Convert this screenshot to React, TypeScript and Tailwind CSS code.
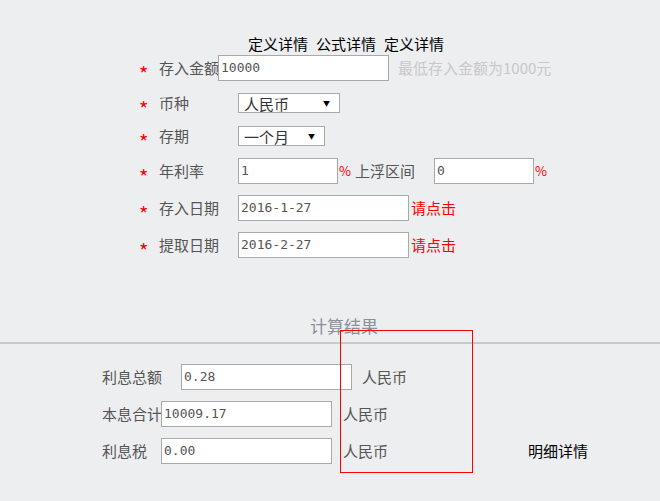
import React from "react";

const font = { fontFamily: '"Noto Sans CJK SC", "Noto Sans", sans-serif' };

function Star() {
  return (
    <span className="w-[22px] pl-[2px] pt-[12px] text-[20px] leading-none text-[#ff0000]">*</span>
  );
}

function Box({ value, w }: { value: string; w: string }) {
  return (
    <div
      className={`${w} h-[26px] border border-[#a9a9a9] bg-white flex items-center pl-[2px] text-[13px] text-[#555] font-['DejaVu_Sans_Mono',monospace]`}
    >
      {value}
    </div>
  );
}

function Select({ value, w }: { value: string; w: string }) {
  return (
    <div
      className={`${w} h-[20px] border border-[#a9a9a9] bg-white flex items-center justify-between pl-[5px] pr-[9px] text-[15px] text-[#333]`}
    >
      <span className="leading-none">{value}</span>
      <span className="text-[7px] text-black leading-none">▼</span>
    </div>
  );
}

export default function App() {
  return (
    <div className="relative w-[660px] h-[501px] bg-[#edeef0] overflow-hidden" style={font}>
      <div className="flex gap-[8px] pt-[34px] pl-[248px] h-[55px] text-[15px] leading-[20px] text-black whitespace-nowrap">
        <span>定义详情</span>
        <span>公式详情</span>
        <span>定义详情</span>
      </div>

      <div className="pl-[137px] text-[15px] text-[#555]">
        <div className="flex items-center h-[26px]">
          <Star />
          <span className="w-[59px] whitespace-nowrap">存入金额</span>
          <Box value="10000" w="w-[171px]" />
          <span className="ml-[9px] text-[#c8c8c8] whitespace-nowrap">最低存入金额为1000元</span>
        </div>
        <div className="flex items-center h-[20px] mt-[12px]">
          <Star />
          <span className="w-[79px]">币种</span>
          <Select value="人民币" w="w-[102px]" />
        </div>
        <div className="flex items-center h-[20px] mt-[13px]">
          <Star />
          <span className="w-[79px]">存期</span>
          <Select value="一个月" w="w-[87px]" />
        </div>
        <div className="flex items-center h-[26px] mt-[12px]">
          <Star />
          <span className="w-[79px]">年利率</span>
          <Box value="1" w="w-[100px]" />
          <span className="w-[17px] pl-[1px] text-[13px] text-[#ff0000]">%</span>
          <span className="w-[79px]">上浮区间</span>
          <Box value="0" w="w-[100px]" />
          <span className="pl-[1px] text-[13px] text-[#ff0000]">%</span>
        </div>
        <div className="flex items-center h-[26px] mt-[11px]">
          <Star />
          <span className="w-[79px]">存入日期</span>
          <Box value="2016-1-27" w="w-[171px]" />
          <span className="ml-[2px] text-[#ff0000]">请点击</span>
        </div>
        <div className="flex items-center h-[26px] mt-[11px]">
          <Star />
          <span className="w-[79px]">提取日期</span>
          <Box value="2016-2-27" w="w-[171px]" />
          <span className="ml-[2px] text-[#ff0000]">请点击</span>
        </div>
      </div>

      <div className="mt-[57px] pl-[310px] h-[27px] text-[17px] leading-[22px] text-[#8a8f99]">计算结果</div>
      <div className="h-[2px] bg-[#c8c8c8]" />

      <div className="pl-[102px] pt-[20px] text-[15px] text-[#555]">
        <div className="flex items-center h-[26px]">
          <span className="w-[79px]">利息总额</span>
          <Box value="0.28" w="w-[171px]" />
          <span className="ml-[10px]">人民币</span>
        </div>
        <div className="flex items-center h-[26px] mt-[11px]">
          <span className="w-[59px] whitespace-nowrap">本息合计</span>
          <Box value="10009.17" w="w-[171px]" />
          <span className="ml-[11px]">人民币</span>
        </div>
        <div className="flex items-center h-[26px] mt-[11px]">
          <span className="w-[59px]">利息税</span>
          <Box value="0.00" w="w-[171px]" />
          <span className="ml-[11px]">人民币</span>
          <span className="ml-[140px] text-black">明细详情</span>
        </div>
      </div>

      <div className="absolute left-[340px] top-[330px] w-[133px] h-[143px] border border-[#ff0000]" />
    </div>
  );
}
